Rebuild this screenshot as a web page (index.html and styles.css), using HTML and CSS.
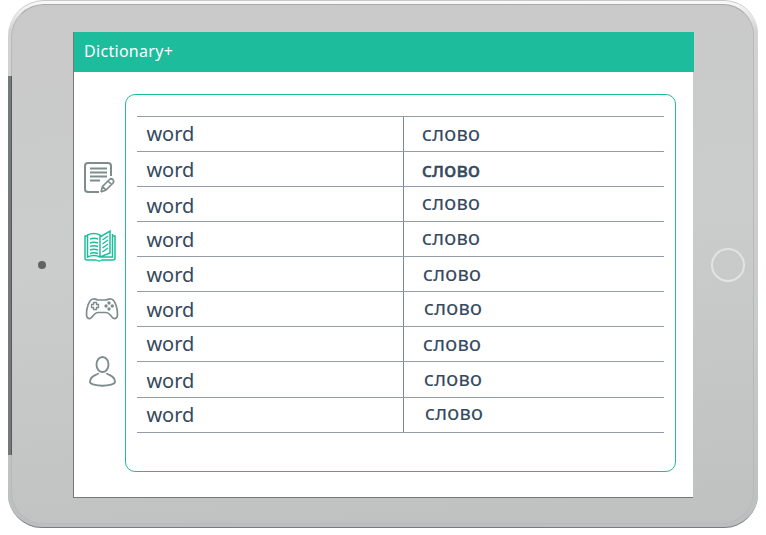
FILE: index.html
```html
<!DOCTYPE html>
<html lang="en">
<head>
<meta charset="utf-8">
<title>Dictionary+</title>
<link rel="stylesheet" href="styles.css">
</head>
<body>
<div class="tablet">
  <div class="bezel">
    <div class="side side-left"><span class="camera"></span></div>
    <main class="screen">
      <header class="bar">Dictionary+</header>
      <div class="content">
        <nav class="menu">
          <svg class="icon" width="34" height="34" viewBox="0 0 34 34" fill="none" stroke="#7f8c8d" stroke-width="2">
            <path d="M16 31H5Q2 31 2 28V5Q2 2 5 2H25Q28 2 28 5V15"/>
            <path d="M7 7.500H24M7 11.500H24M7 15.500H24M7 19.500H17" stroke-width="1.8"/>
            <path d="M18 31L19.500 25.500L26.500 18.500Q28 17 29.800 18.500Q31.500 20.200 30 22L23 29L18 31M25 20L28.500 23.500M19.500 25.500L23 29" stroke-width="1.7"/>
          </svg>
          <svg class="icon" width="34" height="34" viewBox="0 0 34 34" fill="none" stroke="#1fbd9c" stroke-width="1.5">
            <path d="M4.500 7H2V29Q2 31 4 31H13Q16 33 19 31H30Q32 31 32 29V7H29.500"/>
            <path d="M17 28Q11 25 4.500 28V6Q11 3 17 6V28L27 24V2L17 8M29.500 5V28H18"/>
            <path d="M7 10Q11 8.500 15 10M7 14Q11 12.500 15 14M7 17.500Q11 16 15 17.500M7 21Q11 19.500 15 21M7 24.500Q11 23 15 24.500M19.500 11L25 7M19.500 15L25 11M19.500 19L25 15M19.500 23L25 19" stroke-width="1.4"/>
          </svg>
          <svg class="icon icon-game" width="34" height="24" viewBox="0 0 34 24" fill="none" stroke="#7f8c8d" stroke-width="1.7">
            <path d="M8 2C11 1.500 11 3 14 3H20C23 3 23 1.500 26 2C30 2.500 33 12 32.500 18C32.200 22 29 22.500 27 20C24.500 17 23.500 15.500 21 15.500H13C10.500 15.500 9.500 17 7 20C5 22.500 1.800 22 1.500 18C1 12 4 2.500 8 2Z"/>
            <path d="M8.500 5.500H11.500V7.500H13.500V10.500H11.500V12.500H8.500V10.500H6.500V7.500H8.500Z" stroke-width="1.3"/>
            <g fill="#7f8c8d" stroke="none"><circle cx="24" cy="6" r="1.700"/><circle cx="24" cy="12" r="1.700"/><circle cx="21" cy="9" r="1.700"/><circle cx="27.300" cy="9" r="1.700"/></g>
          </svg>
          <svg class="icon icon-user" width="30" height="34" viewBox="0 0 30 34" fill="none" stroke="#7f8c8d" stroke-width="1.900">
            <ellipse cx="14.500" cy="9.500" rx="6" ry="7.500"/>
            <path d="M10.500 18C9.500 20.500 2 20 2 27C2 29 8 30.700 14.500 30.700S27 29 27 27C27 20 19.500 20.500 18.500 18"/>
          </svg>
        </nav>
        <section class="card">
          <div class="words">
            <div class="row"><span class="cell">word</span><span class="cell tr">слово</span></div>
            <div class="row"><span class="cell d1">word</span><span class="cell tr d1 strong">слово</span></div>
            <div class="row"><span class="cell d2">word</span><span class="cell tr u1">слово</span></div>
            <div class="row"><span class="cell d1">word</span><span class="cell tr u1">слово</span></div>
            <div class="row"><span class="cell d1">word</span><span class="cell tr r1">слово</span></div>
            <div class="row"><span class="cell d1">word</span><span class="cell tr u1 r2">слово</span></div>
            <div class="row"><span class="cell">word</span><span class="cell tr r1">слово</span></div>
            <div class="row tall"><span class="cell d2">word</span><span class="cell tr r2">слово</span></div>
            <div class="row"><span class="cell">word</span><span class="cell tr u2 r3">слово</span></div>
          </div>
        </section>
      </div>
    </main>
    <div class="side side-right"><span class="home"></span></div>
  </div>
  <span class="edge"></span>
</div>
</body>
</html>
```
FILE: styles.css
```css
* { box-sizing: border-box; }
body {
  margin: 0;
  background: #fff;
  color: #34495e;
  font-family: "Noto Sans", sans-serif;
  overflow: hidden;
}
.tablet {
  position: relative;
  width: 750px;
  height: 528px;
  margin-left: 8px;
  padding: 3px 4px 3px 3px;
  border-radius: 36px 34px 34px 34px;
  border-top: 1px solid #c9c9c9;
  border-bottom: 1px solid #777b7d;
  background: linear-gradient(#fafafa 0, #d2d2d2 30px, #c9cacb 60%, #bcbebf 100%);
}
.bezel {
  display: flex;
  height: 520px;
  padding-top: 27px;
  border-radius: 33px 31px 32px 32px;
  border: 1px solid #b8b9ba;
  border-top-color: #aaa;
  background: linear-gradient(175deg, #c9c9c9 0%, #cbcccc 45%, #bfc1c1 100%);
}
.side {
  flex: none;
  display: flex;
  align-items: center;
  height: 465px;
}
.side-left { width: 61px; padding-left: 26px; }
.side-right { flex: 1; padding-left: 18px; }
.camera {
  width: 8px;
  height: 8px;
  border-radius: 50%;
  background: #626263;
}
.home {
  width: 34px;
  height: 34px;
  border: 2px solid #e2e3e3;
  border-radius: 50%;
}
.edge {
  position: absolute;
  left: 0;
  top: 75px;
  width: 4px;
  height: 379px;
  border-right: 1px solid #565b5c;
  background: #73787a;
}
.screen {
  flex: none;
  width: 620px;
  height: 466px;
  border-left: 1px solid #777;
  border-bottom: 1px solid #777;
  background: #fff;
}
.bar {
  width: 620px;
  height: 40px;
  padding-left: 10px;
  background: #1cbc9c;
  color: #fff;
  font-size: 16px;
  line-height: 38px;
  letter-spacing: 0.3px;
}
.content { display: flex; }
.menu {
  flex: none;
  display: flex;
  flex-direction: column;
  width: 51px;
  padding: 89px 0 0 9px;
}
.icon { display: block; }
.icon + .icon { margin-top: 34px; }
.icon + .icon-game { margin: 34px 0 0 2px; }
.icon + .icon-user { margin: 34px 0 0 5px; }
.card {
  flex: none;
  width: 551px;
  height: 378px;
  margin-top: 22px;
  padding: 21px 11px 0;
  border: 1px solid #1fbd9c;
  border-radius: 10px;
}
.words {
  width: 527px;
  border-bottom: 1px solid #929da8;
}
.row {
  display: grid;
  grid-template-columns: 266px 261px;
  height: 35px;
  border-top: 1px solid #929da8;
}
.tall { height: 36px; }
.cell {
  padding: 7px 0 0 9.4px;
  font-size: 20px;
  line-height: 20px;
}
.tr {
  padding-left: 18px;
  border-left: 1px solid #7c8997;
  letter-spacing: 0.3px;
  -webkit-text-stroke: 0.15px #34495e;
}
.strong { -webkit-text-stroke-width: 0.6px; }
.d1 { padding-top: 8px; }
.d2 { padding-top: 9px; }
.u1 { padding-top: 6px; }
.u2 { padding-top: 5px; }
.r1 { padding-left: 19px; }
.r2 { padding-left: 20px; }
.r3 { padding-left: 21px; }
```
